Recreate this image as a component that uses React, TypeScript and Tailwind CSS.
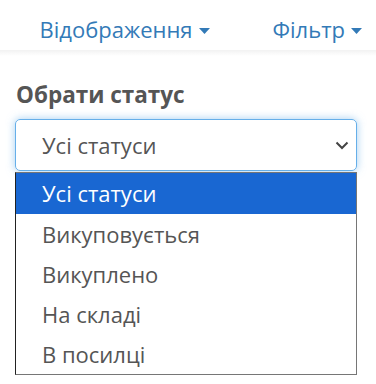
const items = ['Усі статуси', 'Викуповується', 'Викуплено', 'На складі', 'В посилці'];

function Caret() {
  return (
    <svg width="11" height="6" viewBox="0 0 11 6" className="ml-[6px] mt-[2px]">
      <path d="M0 0h11L5.5 6z" fill="#337ab7" />
    </svg>
  );
}

export default function App() {
  return (
    <div className="h-[384px] w-[376px] overflow-hidden bg-white font-['Open_Sans',sans-serif]">
      <div className="relative flex h-[50px] items-center justify-end gap-[63px] pt-[9px] pr-[14px] text-[22px] text-[#337ab7]">
        <span className="flex items-center">
          Відображення
          <Caret />
        </span>
        <span className="flex items-center">
          Фільтр
          <Caret />
        </span>
        <div className="absolute inset-x-0 top-full h-[6px] bg-gradient-to-b from-[#f2f2f2] to-white" />
      </div>

      <div className="pr-[19px] pl-[15px] pt-[30px]">
        <div className="pl-px text-[22.5px] leading-[30px] font-bold text-[#555]">Обрати статус</div>
        <div className="mt-[9px] flex h-[52px] items-center justify-between rounded-[5px] border border-[#66afe9] pr-[7px] pl-[26px] text-[22px] text-[#555] shadow-[0_0_8px_rgba(102,175,233,0.6)]">
          <span>Усі статуси</span>
          <svg width="14" height="9" viewBox="0 0 14 9">
            <path d="M1.5 1.5l5.5 5.5 5.5-5.5" stroke="#444" strokeWidth="2" fill="none" />
          </svg>
        </div>
        <div className="mt-px border border-l-[#222] border-[#767676] bg-white">
          {items.map((t, i) => (
            <div
              key={t}
              className={`flex h-[40px] items-center pl-[26px] text-[22px] ${
                i === 0 ? 'h-[41px] bg-[#1967d2] text-white' : 'text-[#555]'
              }`}
            >
              {t}
            </div>
          ))}
        </div>
      </div>
    </div>
  );
}
